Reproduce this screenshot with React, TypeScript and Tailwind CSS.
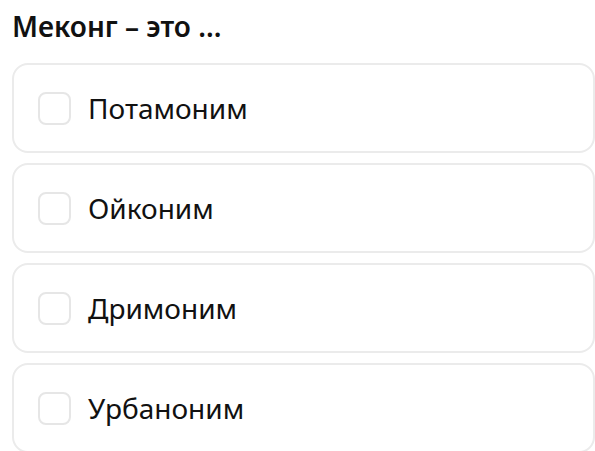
const options = ["Потамоним", "Ойконим", "Дримоним", "Урбаноним"];

export default function App() {
  return (
    <div
      className="h-[451px] w-[595px] overflow-hidden bg-white pl-3 text-[#111]"
      style={{ fontFamily: "'Noto Sans', Roboto, sans-serif" }}
    >
      <h1 className="pt-[7px] text-[28px] font-semibold leading-[38px]">Меконг – это ...</h1>
      <div className="mt-[18px] flex flex-col gap-[10px]">
        {options.map((option) => (
          <label
            key={option}
            className="flex h-[90px] w-[583px] shrink-0 items-center gap-[17px] rounded-[16px] border-2 border-[#ebebeb] pl-[24px]"
          >
            <span className="h-[33px] w-[33px] shrink-0 rounded-[8px] border-2 border-[#e6e6e6] bg-white" />
            <span className="text-[28px] leading-none">{option}</span>
          </label>
        ))}
      </div>
    </div>
  );
}
